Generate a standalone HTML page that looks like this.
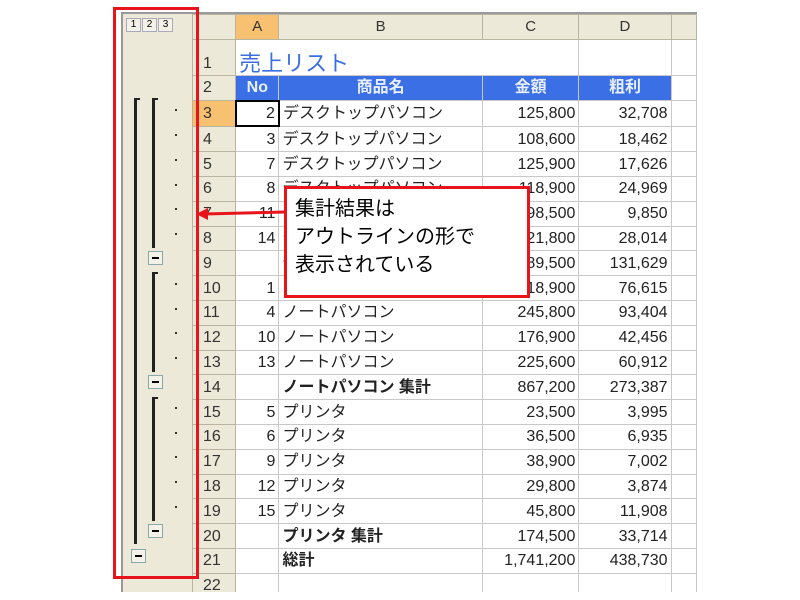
<!DOCTYPE html>
<html><head><meta charset="utf-8"><style>
body{margin:0;width:800px;height:600px;background:#fff;position:relative;overflow:hidden;font-family:"Liberation Sans","Noto Sans CJK JP",sans-serif}
.frame{position:absolute;left:121px;top:12px;width:576px;height:580px;background:#ece9d8;border-left:2px solid #999;border-top:2px solid #999;box-sizing:border-box;overflow:hidden}
table{position:absolute;left:69px;top:0;border-collapse:collapse;table-layout:fixed}
td{border:1px solid #c8c8c8;padding:0 3px;font-size:16px;color:#222;white-space:nowrap;overflow:hidden;background:#fff;height:23.8px;line-height:23px}
td.h{background:#ece9d8;color:#333;text-align:center;border-color:#b8b4a0;font-size:15px}
td.rh{background:#ece9d8;text-align:left;padding-left:10px;border-color:#b8b4a0;font-size:16px;color:#333}
td.o{background:#f7c171}
td.r{text-align:right}
td.bl{background:#3b6fe6;color:#e8f0ff;font-weight:bold;text-align:center}
td.b{font-weight:bold}
.lv{position:absolute;font-size:10px;border:1px solid #aab;width:13px;height:12px;text-align:center;line-height:12px;background:#f4f2e8;color:#000}
.bar{position:absolute;background:#222;width:3px}
.tick{position:absolute;background:#222;height:2px;width:6px}
.mn{position:absolute;width:13px;height:12px;border:1px solid #8aa;background:#f4f2e8}
.mn:after{content:"";position:absolute;left:3px;top:5px;width:7px;height:2px;background:#000}
.dot{position:absolute;width:2px;height:2px;background:#333}
</style></head><body>
<div class="frame">
<div class="lv" style="left:3px;top:4px">1</div><div class="lv" style="left:19px;top:4px">2</div><div class="lv" style="left:35px;top:4px">3</div>
<table>
<colgroup><col style="width:46px"><col style="width:47px"><col style="width:198px"><col style="width:101px"><col style="width:99px"><col style="width:30px"></colgroup>
<tr><td class="h" style="height:23px"></td><td class="h o">A</td><td class="h">B</td><td class="h">C</td><td class="h">D</td><td class="h"></td></tr>
<tr><td class="rh" style="height:35px;vertical-align:bottom">1</td><td colspan="2" style="color:#3a6fe0;font-size:22px;vertical-align:bottom;border-right-color:#fff">売上リスト</td><td></td><td></td><td></td></tr>
<tr><td class="rh">2</td><td class="bl">No</td><td class="bl">商品名</td><td class="bl">金額</td><td class="bl">粗利</td><td></td></tr>
<tr><td class="rh o">3</td><td class="r" style="border:2px solid #000">2</td><td>デスクトップパソコン</td><td class="r">125,800</td><td class="r">32,708</td><td></td></tr>
<tr><td class="rh">4</td><td class="r">3</td><td>デスクトップパソコン</td><td class="r">108,600</td><td class="r">18,462</td><td></td></tr>
<tr><td class="rh">5</td><td class="r">7</td><td>デスクトップパソコン</td><td class="r">125,900</td><td class="r">17,626</td><td></td></tr>
<tr><td class="rh">6</td><td class="r">8</td><td>デスクトップパソコン</td><td class="r">118,900</td><td class="r">24,969</td><td></td></tr>
<tr><td class="rh">7</td><td class="r">11</td><td>デスクトップパソコン</td><td class="r">98,500</td><td class="r">9,850</td><td></td></tr>
<tr><td class="rh">8</td><td class="r">14</td><td>デスクトップパソコン</td><td class="r">121,800</td><td class="r">28,014</td><td></td></tr>
<tr><td class="rh">9</td><td></td><td class="b">デスクトップパソコン 集計</td><td class="r">689,500</td><td class="r">131,629</td><td></td></tr>
<tr><td class="rh">10</td><td class="r">1</td><td>ノートパソコン</td><td class="r">118,900</td><td class="r">76,615</td><td></td></tr>
<tr><td class="rh">11</td><td class="r">4</td><td>ノートパソコン</td><td class="r">245,800</td><td class="r">93,404</td><td></td></tr>
<tr><td class="rh">12</td><td class="r">10</td><td>ノートパソコン</td><td class="r">176,900</td><td class="r">42,456</td><td></td></tr>
<tr><td class="rh">13</td><td class="r">13</td><td>ノートパソコン</td><td class="r">225,600</td><td class="r">60,912</td><td></td></tr>
<tr><td class="rh">14</td><td></td><td class="b">ノートパソコン 集計</td><td class="r">867,200</td><td class="r">273,387</td><td></td></tr>
<tr><td class="rh">15</td><td class="r">5</td><td>プリンタ</td><td class="r">23,500</td><td class="r">3,995</td><td></td></tr>
<tr><td class="rh">16</td><td class="r">6</td><td>プリンタ</td><td class="r">36,500</td><td class="r">6,935</td><td></td></tr>
<tr><td class="rh">17</td><td class="r">9</td><td>プリンタ</td><td class="r">38,900</td><td class="r">7,002</td><td></td></tr>
<tr><td class="rh">18</td><td class="r">12</td><td>プリンタ</td><td class="r">29,800</td><td class="r">3,874</td><td></td></tr>
<tr><td class="rh">19</td><td class="r">15</td><td>プリンタ</td><td class="r">45,800</td><td class="r">11,908</td><td></td></tr>
<tr><td class="rh">20</td><td></td><td class="b">プリンタ 集計</td><td class="r">174,500</td><td class="r">33,714</td><td></td></tr>
<tr><td class="rh">21</td><td></td><td class="b">総計</td><td class="r">1,741,200</td><td class="r">438,730</td><td></td></tr>
<tr><td class="rh">22</td><td></td><td></td><td></td><td></td><td></td></tr>
</table>
</div>
<div class="bar" style="left:134px;top:98px;height:446px"></div><div class="tick" style="left:134px;top:98px"></div>
<div class="bar" style="left:152px;top:98px;height:150px"></div><div class="tick" style="left:152px;top:98px"></div>
<div class="bar" style="left:152px;top:272px;height:100px"></div><div class="tick" style="left:152px;top:272px"></div>
<div class="bar" style="left:152px;top:397px;height:124px"></div><div class="tick" style="left:152px;top:397px"></div>
<div class="mn" style="left:148px;top:251px"></div>
<div class="mn" style="left:148px;top:375px"></div>
<div class="mn" style="left:148px;top:524px"></div>
<div class="mn" style="left:131px;top:549px"></div>
<div class="dot" style="left:175px;top:109px"></div><div class="dot" style="left:175px;top:134px"></div><div class="dot" style="left:175px;top:159px"></div><div class="dot" style="left:175px;top:184px"></div><div class="dot" style="left:175px;top:208px"></div><div class="dot" style="left:175px;top:233px"></div>
<div class="dot" style="left:175px;top:283px"></div><div class="dot" style="left:175px;top:308px"></div><div class="dot" style="left:175px;top:332px"></div><div class="dot" style="left:175px;top:357px"></div>
<div class="dot" style="left:175px;top:407px"></div><div class="dot" style="left:175px;top:432px"></div><div class="dot" style="left:175px;top:456px"></div><div class="dot" style="left:175px;top:481px"></div><div class="dot" style="left:175px;top:506px"></div>
<div style="position:absolute;left:113px;top:7px;width:80px;height:566px;border:3px solid #e8141c"></div>
<div style="position:absolute;left:284px;top:186px;width:232px;height:100px;border:3px solid #e8141c;background:#fff;font-size:20px;line-height:28px;padding:6px 0 0 8px;box-sizing:content-box;color:#000">集計結果は<br>アウトラインの形で<br>表示されている</div>
<svg style="position:absolute;left:190px;top:200px" width="100" height="30"><line x1="96" y1="12" x2="14" y2="14" stroke="#e8141c" stroke-width="3"/><polygon points="6,14 18,8 18,20" fill="#e8141c"/></svg>
</body></html>
